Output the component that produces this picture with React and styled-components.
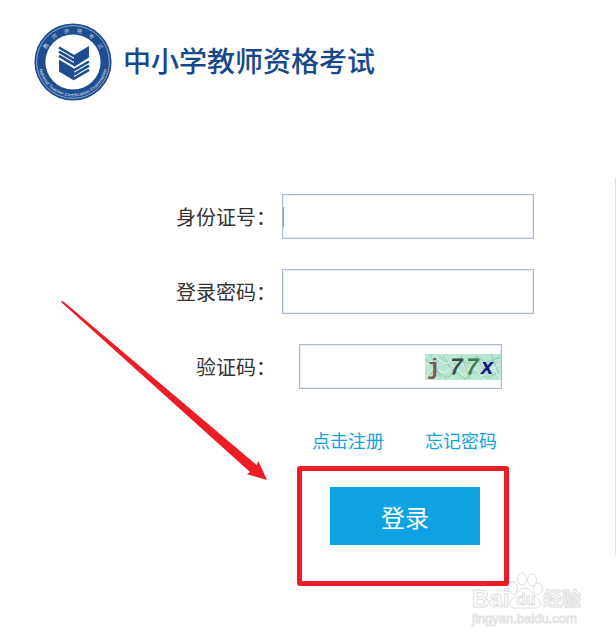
import React, { useState } from 'react';
import styled, { createGlobalStyle } from 'styled-components';

const GlobalStyle = createGlobalStyle`
    * {
        box-sizing: border-box;
    }

    body {
        margin: 0;
        background: #fff;
        color: #333;
        font-family: "Noto Sans CJK SC", sans-serif;
    }
`;

const Page = styled.div`
    position: relative;
    min-height: 100vh;
    overflow: hidden;
`;

const Header = styled.header`
    display: flex;
    align-items: center;
    gap: 11px;
    padding: 22px 34px 0;
`;

const Logo = styled.svg`
    width: 78px;
    height: 80px;
    flex: none;
`;

const Title = styled.h1`
    margin: 0;
    padding-bottom: 4px;
    font-size: 28px;
    line-height: 40px;
    font-weight: 500;
    color: #17488a;
    white-space: nowrap;
`;

const Panel = styled.main`
    position: relative;
    margin-top: 76px;
    padding: 16px 81px 10px 176px;
    border-right: 1px solid #e2e2e2;
`;

const Form = styled.form`
    display: flex;
    flex-direction: column;
`;

const Row = styled.div`
    display: grid;
    grid-template-columns: 100px minmax(0, 1fr);
    column-gap: 6px;
    align-items: center;
    margin-bottom: 30px;
`;

const Label = styled.label`
    font-size: 20px;
    line-height: 30px;
    font-weight: 400;
    text-align: right;
    white-space: nowrap;
`;

const Field = styled.div`
    display: flex;
    align-items: center;
    height: 45px;
    margin: ${(props) => (props.$inset ? '0 32px 0 17px' : '0')};
    border: 1px solid #a5bbd0;
    box-shadow: inset 0 0 0 1px #e8eef4;
`;

const Input = styled.input`
    flex: 1;
    min-width: 0;
    height: 100%;
    padding: 0 8px;
    border: none;
    outline: none;
    background: transparent;
    font: inherit;
    font-size: 18px;
`;

const Caret = styled.span`
    width: 1px;
    height: 20px;
    background: #8f9aa5;
`;

const Captcha = styled.svg`
    width: 76px;
    height: 26px;
    flex: none;
    overflow: visible;
`;

const Actions = styled.div`
    margin-left: 106px;
    padding: 0 36px 0 30px;
`;

const Links = styled.nav`
    display: flex;
    gap: 41px;
    margin-top: 6px;
`;

const TextLink = styled.a`
    font-size: 18px;
    line-height: 30px;
    font-weight: 400;
    color: #0fa2e2;
    text-decoration: none;
    white-space: nowrap;
`;

const Submit = styled.div`
    position: relative;
    display: flex;
    justify-content: center;
    margin-top: 32px;
`;

const Button = styled.button`
    width: 150px;
    height: 58px;
    border: none;
    background: #0fa2e2;
    color: #fff;
    font-family: inherit;
    font-size: 24px;
    font-weight: 400;
    cursor: pointer;
`;

const Highlight = styled.div`
    position: absolute;
    top: -21px;
    right: -11px;
    bottom: -41px;
    left: -15px;
    border: 5px solid #ee1c25;
    border-radius: 3px;
    pointer-events: none;
`;

const Arrow = styled.svg`
    position: absolute;
    top: 122px;
    left: 60px;
    width: 208px;
    height: 182px;
    pointer-events: none;
`;

const Watermark = styled.svg`
    position: absolute;
    right: 26px;
    bottom: 10px;
    width: 120px;
    height: 60px;
`;

const Emblem = () => (
    <Logo viewBox="0 0 78 80" aria-hidden="true">
        <defs>
            <path id="ringTop" d="M9.5 40 A29.5 29.5 0 0 1 68.5 40" />
            <path id="ringBottom" d="M4.5 40 A34.5 34.5 0 0 0 73.5 40" />
        </defs>
        <circle cx="39" cy="40" r="38.6" fill="#1d4c8f" />
        <circle cx="39" cy="40" r="36.4" fill="none" stroke="#a9bfdb" strokeWidth="0.8" />
        <circle cx="39" cy="40" r="27.6" fill="#fff" />
        <text fontSize="5.5" fill="#b9cbe2" textAnchor="middle">
            <textPath href="#ringTop" startOffset="50%">{'教师资格考试'.split('').join('\u2003 ')}</textPath>
        </text>
        <text fontFamily="Liberation Sans" fontSize="4.6" fontWeight="bold" fill="#b3c6df" textAnchor="middle">
            <textPath href="#ringBottom" startOffset="50%">National Teacher Certification Examination</textPath>
        </text>
        {/* open book, loose pages at the top left and bottom right */}
        <g fill="#1d4c8f">
            <path d="M55 24 V35.5 L40 45 V33 Z" />
            <path d="M25 37.5 L40 46.5 V58.5 L25 49.5 Z" />
        </g>
        <g stroke="#1d4c8f" strokeWidth="2.6" fill="none">
            <path d="M25 25.5 L40.5 34.5 M25 29.7 L40.5 38.7 M25 33.9 L40.5 42.9" />
            <path d="M55 39.5 L39.5 48.5 M55 43.7 L39.5 52.7 M55 47.9 L39.5 56.9" />
        </g>
    </Logo>
);

const CaptchaImage = () => (
    <Captcha viewBox="0 0 76 26" role="img" aria-label="验证码图片">
        <rect width="76" height="26" fill="#b9e6d1" />
        <g fill="none" strokeWidth="1">
            <path stroke="#8ec8ac" d="M0 5 L9 12 L15 3 L26 14 L34 4 L43 10 L52 2 L61 9 L75 3 M2 21 L12 17 L21 24 L31 18 L40 25 L50 17 L62 24 L74 18" />
            <path stroke="#e2f8ee" d="M0 12 L12 4 L22 10 L30 2 L42 16 L54 8 L64 17 L75 10 M0 25 L8 14 L20 19 L28 11 L38 21 L47 13 L57 22 L68 13 L75 24" />
            <path stroke="#a5c4bd" d="M5 0 L16 24 M18 2 L31 20 M36 1 L45 25 M51 3 L62 20 M66 0 L73 18" />
        </g>
        <g fontFamily="Liberation Sans" fontSize="22">
            <text x="2" y="20" fontFamily="Liberation Mono" fontWeight="bold" fill="#80574e">j</text>
            <text x="25" y="20" fontStyle="italic" fill="#314c49" stroke="#314c49" strokeWidth="0.8">7</text>
            <text x="41" y="20" fontStyle="italic" fill="#377a49" stroke="#377a49" strokeWidth="0.8">7</text>
            <text x="56" y="20" fontWeight="bold" fontStyle="italic" fill="#151582">x</text>
        </g>
    </Captcha>
);

const BaiduMark = () => (
    <Watermark viewBox="0 0 120 60" aria-hidden="true">
        <g fill="#fff" stroke="#dedede" strokeWidth="1">
            <ellipse cx="43" cy="18" rx="4.5" ry="6" />
            <ellipse cx="52" cy="9" rx="4.5" ry="6" />
            <ellipse cx="62" cy="10" rx="4.5" ry="6" />
            <ellipse cx="68" cy="19" rx="4.5" ry="6" />
            <path d="M55 18 C49 18 48 24 43 28 C37 33 40 39 47 38 H63 C71 39 73 33 67 28 C62 24 61 18 55 18 Z" />
        </g>
        <g fill="#fff" stroke="#dedede" strokeWidth="1" fontFamily="Liberation Sans" fontWeight="bold">
            <text x="2" y="37" fontSize="24">Bai</text>
            <text x="46" y="35" fontSize="16">du</text>
            <text x="73" y="36" fontSize="19" fontFamily="Noto Sans CJK SC">经验</text>
            <text x="2" y="53" fontSize="13" fontWeight="normal" stroke="#e4e4e4">jingyan.baidu.com</text>
        </g>
    </Watermark>
);

const App = () => {
    const [idNumber, setIdNumber] = useState('');
    const [password, setPassword] = useState('');
    const [code, setCode] = useState('');

    const handleLogin = (e) => {
        e.preventDefault();
    };

    return (
        <Page>
            <GlobalStyle />
            <Header>
                <Emblem />
                <Title>中小学教师资格考试</Title>
            </Header>
            <Panel>
                <Form onSubmit={handleLogin}>
                    <Row>
                        <Label htmlFor="idNumber">身份证号：</Label>
                        <Field>
                            <Caret />
                            <Input
                                id="idNumber"
                                type="text"
                                value={idNumber}
                                onChange={(e) => setIdNumber(e.target.value)}
                            />
                        </Field>
                    </Row>
                    <Row>
                        <Label htmlFor="password">登录密码：</Label>
                        <Field>
                            <Input
                                id="password"
                                type="password"
                                value={password}
                                onChange={(e) => setPassword(e.target.value)}
                            />
                        </Field>
                    </Row>
                    <Row>
                        <Label htmlFor="code">验证码：</Label>
                        <Field $inset>
                            <Input
                                id="code"
                                type="text"
                                value={code}
                                onChange={(e) => setCode(e.target.value)}
                            />
                            <CaptchaImage />
                        </Field>
                    </Row>
                    <Actions>
                        <Links>
                            <TextLink href="#register">点击注册</TextLink>
                            <TextLink href="#forgot">忘记密码</TextLink>
                        </Links>
                        <Submit>
                            <Button type="submit">登录</Button>
                            <Highlight />
                        </Submit>
                    </Actions>
                </Form>
                {/* Pointer towards the login button */}
                <Arrow viewBox="60 300 208 182" aria-hidden="true">
                    <path fill="#ee1c25" d="M61 302 L62 301 L64 302 L256.7 465 L258.3 461 L267 480 L247 474.3 L250 472 Z" />
                </Arrow>
            </Panel>
            <BaiduMark />
        </Page>
    );
};

export default App;
